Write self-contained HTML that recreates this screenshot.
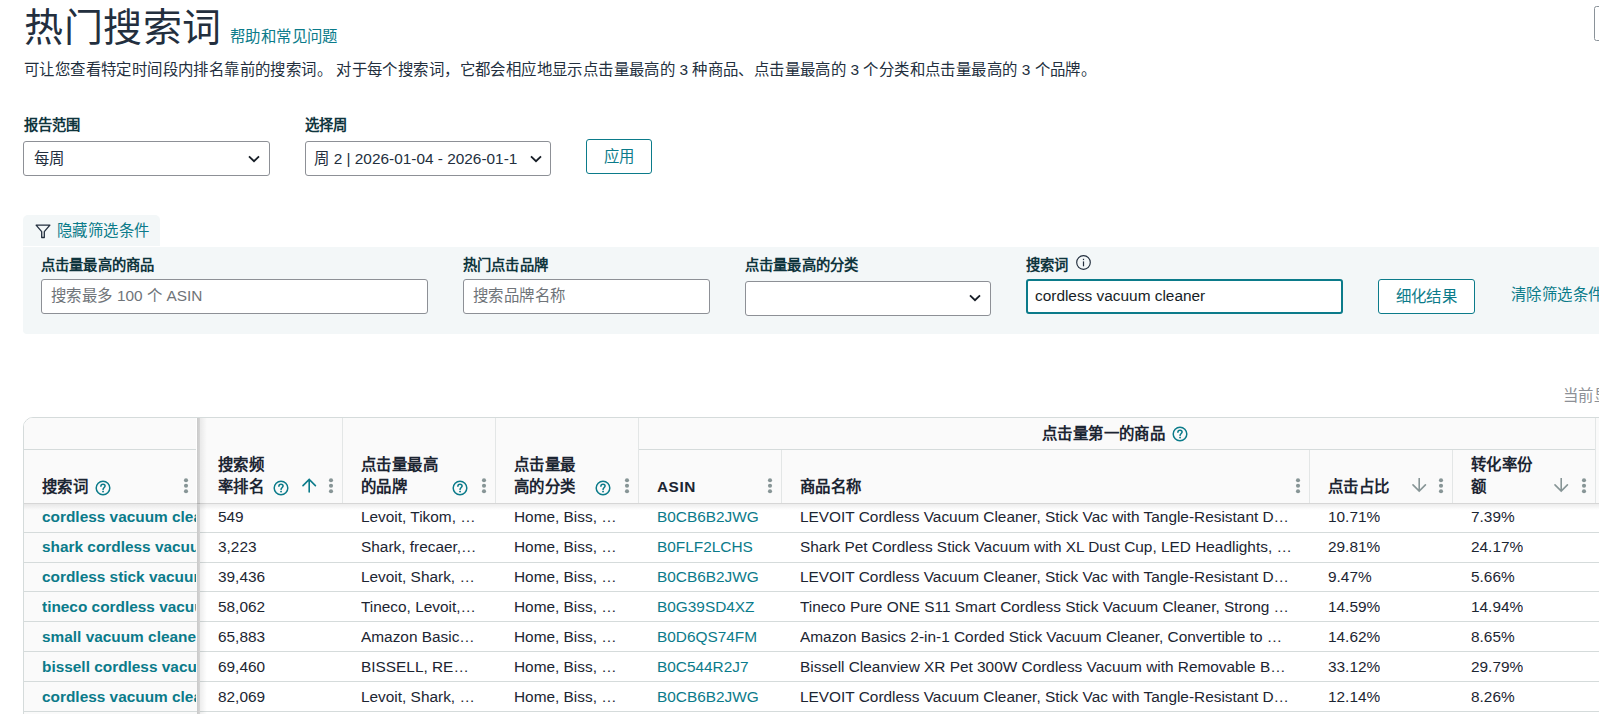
<!DOCTYPE html>
<html lang="zh-CN"><head><meta charset="utf-8">
<style>
*{box-sizing:border-box;margin:0;padding:0}
html,body{width:1599px;height:714px;overflow:hidden;background:#fff}
body{font-family:"Liberation Sans",sans-serif;color:#232f3e;position:relative;font-size:15.4px}
.a{position:absolute;white-space:nowrap}
.link{color:#0b7b8a}
.lbl{font-weight:bold;font-size:14.3px;color:#0f353d}
.sel,.inp{position:absolute;background:#fff;border:1px solid #8d9096;border-radius:3px}
.chev{position:absolute;width:10px;height:7px}
.btn{position:absolute;border:1px solid #0b7b8a;border-radius:3px;color:#0b7b8a;background:#fff;text-align:center}
.ph{color:#6f7479}
.th{position:absolute;font-weight:bold;font-size:15.4px;color:#1c2532;line-height:22px;white-space:nowrap}
.td{position:absolute;font-size:15.4px;line-height:29px;height:29px;white-space:nowrap;overflow:hidden;color:#1c2532}
.term{font-weight:bold;color:#0b7b8a}
.ic{position:absolute}
.c{font-style:normal;letter-spacing:0.026em}
.t .c{letter-spacing:0.6px}
.td.link{color:#0b7b8a}
.lbl .c{letter-spacing:0.15px}
</style></head><body>

<div class="a t" style="left:24px;top:3px;font-size:39px;line-height:50px;color:#232f3e"><i class="c">热门搜索词</i></div>
<div class="a link" style="left:230px;top:27px;font-size:15.4px;line-height:20px"><i class="c">帮助和常见问题</i></div>
<div class="a" style="left:1594px;top:6px;width:20px;height:35px;border:1px solid #8a9299;border-radius:2.5px"></div>
<div class="a" style="left:24px;top:60px;font-size:15.4px;line-height:20px"><i class="c">可让您查看特定时间段内排名靠前的搜索词。</i> <i class="c">对于每个搜索词，它都会相应地显示点击量最高的</i> 3 <i class="c">种商品、点击量最高的</i> 3 <i class="c">个分类和点击量最高的</i> 3 <i class="c">个品牌。</i></div>

<div class="a lbl" style="left:24px;top:114.5px;line-height:20px"><i class="c">报告范围</i></div>
<div class="sel" style="left:23px;top:141px;width:247px;height:35px"><span class="a" style="left:10px;top:7px;line-height:20px"><i class="c">每周</i></span>
<svg class="chev" style="left:224px;top:13px;width:12px;height:8px" viewBox="0 0 12 8"><path d="M1 1.3 L6 6.2 L11 1.3" fill="none" stroke="#161d26" stroke-width="1.8"/></svg></div>
<div class="a lbl" style="left:305px;top:114.5px;line-height:20px"><i class="c">选择周</i></div>
<div class="sel" style="left:305px;top:141px;width:246px;height:35px"><span class="a" style="left:8px;top:7px;line-height:20px"><i class="c">周</i> 2 | 2026-01-04 - 2026-01-1</span>
<svg class="chev" style="left:224px;top:13px;width:12px;height:8px" viewBox="0 0 12 8"><path d="M1 1.3 L6 6.2 L11 1.3" fill="none" stroke="#161d26" stroke-width="1.8"/></svg></div>
<div class="btn" style="left:586px;top:139px;width:66px;height:35px;line-height:33px"><i class="c">应用</i></div>

<!-- filter tab -->
<div class="a" style="left:23px;top:215px;width:137px;height:31px;background:#f3f7f8;border-radius:5px 5px 0 0"></div>
<svg class="a" style="left:35px;top:223.5px;width:16px;height:15px" viewBox="0 0 16 15"><path d="M1.1 1.2 H14.9 L9.3 7.7 V13.5 H6.7 V7.7 Z" fill="none" stroke="#232f3e" stroke-width="1.3" stroke-linejoin="round"/></svg>
<div class="a link" style="left:57px;top:221px;font-size:15.4px;line-height:20px"><i class="c">隐藏筛选条件</i></div>
<div class="a" style="left:23px;top:247px;width:1600px;height:87px;background:#f3f7f8;border-radius:0 0 0 4px"></div>

<div class="a lbl" style="left:41px;top:255px;line-height:20px"><i class="c">点击量最高的商品</i></div>
<div class="inp" style="left:41px;top:279px;width:387px;height:35px"><span class="a ph" style="left:9px;top:6px;line-height:20px"><i class="c">搜索最多</i> 100 <i class="c">个</i> ASIN</span></div>
<div class="a lbl" style="left:463px;top:255px;line-height:20px"><i class="c">热门点击品牌</i></div>
<div class="inp" style="left:463px;top:279px;width:247px;height:35px"><span class="a ph" style="left:9px;top:6px;line-height:20px"><i class="c">搜索品牌名称</i></span></div>
<div class="a lbl" style="left:745px;top:255px;line-height:20px"><i class="c">点击量最高的分类</i></div>
<div class="sel" style="left:745px;top:281px;width:246px;height:35px">
<svg class="chev" style="left:223px;top:12px;width:12px;height:8px" viewBox="0 0 12 8"><path d="M1 1.3 L6 6.2 L11 1.3" fill="none" stroke="#161d26" stroke-width="1.8"/></svg></div>
<div class="a lbl" style="left:1026px;top:255px;line-height:20px"><i class="c">搜索词</i></div>
<svg class="a" style="left:1076px;top:255px;width:15px;height:15px" viewBox="0 0 15 15"><circle cx="7.5" cy="7.5" r="6.8" fill="none" stroke="#232f3e" stroke-width="1.15"/><rect x="6.9" y="6.4" width="1.2" height="4.9" fill="#232f3e"/><rect x="6.9" y="3.8" width="1.2" height="1.3" fill="#232f3e"/></svg>
<div class="inp" style="left:1026px;top:279px;width:317px;height:35px;border:2px solid #0b7b8a;border-radius:3px"><span class="a" style="left:7px;top:5px;line-height:20px;color:#161d26">cordless vacuum cleaner</span></div>
<div class="btn" style="left:1378px;top:279px;width:97px;height:35px;line-height:33px"><i class="c">细化结果</i></div>
<div class="a link" style="left:1511px;top:285px;line-height:20px"><i class="c">清除筛选条件</i></div>

<div class="a" style="left:1563px;top:386px;line-height:20px;color:#8d9096"><i class="c">当前显示</i></div>

<div class="a" style="left:23px;top:417px;width:1620px;height:320px;border:1px solid #d5dbdb;border-radius:10px 0 0 0;background:#fff;overflow:hidden">
<div class="a" style="left:0;top:0;width:1620px;height:85px;background:#fafafa"></div>
<div class="a" style="left:614px;top:31px;width:957px;height:1px;background:#d5dbdb"></div>
<div class="a" style="left:318px;top:0;width:1px;height:85px;background:#e3e6e6"></div>
<div class="a" style="left:471px;top:0;width:1px;height:85px;background:#e3e6e6"></div>
<div class="a" style="left:614px;top:0;width:1px;height:85px;background:#e3e6e6"></div>
<div class="a" style="left:757px;top:32px;width:1px;height:53px;background:#e3e6e6"></div>
<div class="a" style="left:1285px;top:32px;width:1px;height:53px;background:#e3e6e6"></div>
<div class="a" style="left:1428px;top:32px;width:1px;height:53px;background:#e3e6e6"></div>
<div class="a" style="left:1571px;top:0;width:1px;height:85px;background:#e3e6e6"></div>
<div class="a" style="left:0;top:85px;width:1620px;height:1px;background:#d6d6d6"></div><div class="a" style="left:0;top:86px;width:1620px;height:6px;background:linear-gradient(rgba(0,0,0,0.075),rgba(0,0,0,0))"></div>
<div class="a" style="left:0;top:114px;width:1620px;height:1px;background:#d5dbdb"></div>
<div class="td" style="left:194px;top:84px">549</div>
<div class="td" style="left:337px;top:84px">Levoit, Tikom, …</div>
<div class="td" style="left:490px;top:84px">Home, Biss, …</div>
<div class="td link" style="left:633px;top:84px">B0CB6B2JWG</div>
<div class="td" style="left:776px;top:84px">LEVOIT Cordless Vacuum Cleaner, Stick Vac with Tangle-Resistant D…</div>
<div class="td" style="left:1304px;top:84px">10.71%</div>
<div class="td" style="left:1447px;top:84px">7.39%</div>
<div class="a" style="left:0;top:144px;width:1620px;height:1px;background:#d5dbdb"></div>
<div class="td" style="left:194px;top:114px">3,223</div>
<div class="td" style="left:337px;top:114px">Shark, frecaer,…</div>
<div class="td" style="left:490px;top:114px">Home, Biss, …</div>
<div class="td link" style="left:633px;top:114px">B0FLF2LCHS</div>
<div class="td" style="left:776px;top:114px">Shark Pet Cordless Stick Vacuum with XL Dust Cup, LED Headlights, …</div>
<div class="td" style="left:1304px;top:114px">29.81%</div>
<div class="td" style="left:1447px;top:114px">24.17%</div>
<div class="a" style="left:0;top:173px;width:1620px;height:1px;background:#d5dbdb"></div>
<div class="td" style="left:194px;top:144px">39,436</div>
<div class="td" style="left:337px;top:144px">Levoit, Shark, …</div>
<div class="td" style="left:490px;top:144px">Home, Biss, …</div>
<div class="td link" style="left:633px;top:144px">B0CB6B2JWG</div>
<div class="td" style="left:776px;top:144px">LEVOIT Cordless Vacuum Cleaner, Stick Vac with Tangle-Resistant D…</div>
<div class="td" style="left:1304px;top:144px">9.47%</div>
<div class="td" style="left:1447px;top:144px">5.66%</div>
<div class="a" style="left:0;top:203px;width:1620px;height:1px;background:#d5dbdb"></div>
<div class="td" style="left:194px;top:174px">58,062</div>
<div class="td" style="left:337px;top:174px">Tineco, Levoit,…</div>
<div class="td" style="left:490px;top:174px">Home, Biss, …</div>
<div class="td link" style="left:633px;top:174px">B0G39SD4XZ</div>
<div class="td" style="left:776px;top:174px">Tineco Pure ONE S11 Smart Cordless Stick Vacuum Cleaner, Strong …</div>
<div class="td" style="left:1304px;top:174px">14.59%</div>
<div class="td" style="left:1447px;top:174px">14.94%</div>
<div class="a" style="left:0;top:233px;width:1620px;height:1px;background:#d5dbdb"></div>
<div class="td" style="left:194px;top:204px">65,883</div>
<div class="td" style="left:337px;top:204px">Amazon Basic…</div>
<div class="td" style="left:490px;top:204px">Home, Biss, …</div>
<div class="td link" style="left:633px;top:204px">B0D6QS74FM</div>
<div class="td" style="left:776px;top:204px">Amazon Basics 2-in-1 Corded Stick Vacuum Cleaner, Convertible to …</div>
<div class="td" style="left:1304px;top:204px">14.62%</div>
<div class="td" style="left:1447px;top:204px">8.65%</div>
<div class="a" style="left:0;top:263px;width:1620px;height:1px;background:#d5dbdb"></div>
<div class="td" style="left:194px;top:234px">69,460</div>
<div class="td" style="left:337px;top:234px">BISSELL, RE…</div>
<div class="td" style="left:490px;top:234px">Home, Biss, …</div>
<div class="td link" style="left:633px;top:234px">B0C544R2J7</div>
<div class="td" style="left:776px;top:234px">Bissell Cleanview XR Pet 300W Cordless Vacuum with Removable B…</div>
<div class="td" style="left:1304px;top:234px">33.12%</div>
<div class="td" style="left:1447px;top:234px">29.79%</div>
<div class="a" style="left:0;top:293px;width:1620px;height:1px;background:#d5dbdb"></div>
<div class="td" style="left:194px;top:264px">82,069</div>
<div class="td" style="left:337px;top:264px">Levoit, Shark, …</div>
<div class="td" style="left:490px;top:264px">Home, Biss, …</div>
<div class="td link" style="left:633px;top:264px">B0CB6B2JWG</div>
<div class="td" style="left:776px;top:264px">LEVOIT Cordless Vacuum Cleaner, Stick Vac with Tangle-Resistant D…</div>
<div class="td" style="left:1304px;top:264px">12.14%</div>
<div class="td" style="left:1447px;top:264px">8.26%</div>
<div class="a" style="left:0;top:0;width:173px;height:320px;background:#fafafa"></div>
<div class="a" style="left:0;top:31px;width:173px;height:1px;background:#d5dbdb"></div>
<div class="a" style="left:0;top:85px;width:173px;height:1px;background:#d6d6d6"></div><div class="a" style="left:0;top:86px;width:173px;height:6px;background:linear-gradient(rgba(0,0,0,0.075),rgba(0,0,0,0))"></div>
<div class="a" style="left:0;top:114px;width:173px;height:1px;background:#d5dbdb"></div>
<div class="td term" style="left:18px;top:84px;width:154px">cordless vacuum cleaner</div>
<div class="a" style="left:0;top:144px;width:173px;height:1px;background:#d5dbdb"></div>
<div class="td term" style="left:18px;top:114px;width:154px">shark cordless vacuum</div>
<div class="a" style="left:0;top:173px;width:173px;height:1px;background:#d5dbdb"></div>
<div class="td term" style="left:18px;top:144px;width:154px">cordless stick vacuum</div>
<div class="a" style="left:0;top:203px;width:173px;height:1px;background:#d5dbdb"></div>
<div class="td term" style="left:18px;top:174px;width:154px">tineco cordless vacuum</div>
<div class="a" style="left:0;top:233px;width:173px;height:1px;background:#d5dbdb"></div>
<div class="td term" style="left:18px;top:204px;width:154px">small vacuum cleaner</div>
<div class="a" style="left:0;top:263px;width:173px;height:1px;background:#d5dbdb"></div>
<div class="td term" style="left:18px;top:234px;width:154px">bissell cordless vacuum</div>
<div class="a" style="left:0;top:293px;width:173px;height:1px;background:#d5dbdb"></div>
<div class="td term" style="left:18px;top:264px;width:154px">cordless vacuum cleaner</div>
<div class="a" style="left:172px;top:0;width:1px;height:85px;background:#fff"></div><div class="a" style="left:173px;top:85px;width:3px;height:1px;background:#b0b0b0;z-index:2"></div><div class="a" style="left:173px;top:0;width:3px;height:320px;background:linear-gradient(90deg,#c9c9c9,#d6d6d6)"></div><div class="a" style="left:176px;top:0;width:7px;height:320px;background:linear-gradient(90deg,rgba(0,0,0,0.07),rgba(0,0,0,0))"></div>
<div class="th" style="left:18px;top:58px"><i class="c">搜索词</i></div>
<div class="th" style="left:194px;top:36px"><i class="c">搜索频</i><br><i class="c">率排名</i></div>
<div class="th" style="left:337px;top:36px"><i class="c">点击量最高</i><br><i class="c">的品牌</i></div>
<div class="th" style="left:490px;top:36px"><i class="c">点击量最</i><br><i class="c">高的分类</i></div>
<div class="th" style="left:633px;top:58px"><span style="letter-spacing:0.5px">ASIN</span></div>
<div class="th" style="left:776px;top:58px"><i class="c">商品名称</i></div>
<div class="th" style="left:1304px;top:58px"><i class="c">点击占比</i></div>
<div class="th" style="left:1447px;top:36px"><i class="c">转化率份</i><br><i class="c">额</i></div>
<div class="th" style="left:1018px;top:5px"><i class="c">点击量第一的商品</i></div>
<svg class="ic" style="left:70.6px;top:62.4px;width:16px;height:16px" viewBox="0 0 16 16"><circle cx="8" cy="8" r="6.8" fill="none" stroke="#0b7b8a" stroke-width="1.5"/><path d="M5.9 6.3 C5.9 5 6.9 4.3 8 4.3 C9.2 4.3 10.1 5.1 10.1 6.1 C10.1 7.4 8.4 7.6 8.1 9.2 V9.6" fill="none" stroke="#0b7b8a" stroke-width="1.5" stroke-linecap="round"/><circle cx="8.05" cy="11.6" r="0.95" fill="#0b7b8a"/></svg>
<svg class="ic" style="left:159px;top:59.5px;width:6px;height:16px" viewBox="0 0 6 16"><circle cx="3" cy="2.2" r="2.05" fill="#879596"/><circle cx="3" cy="7.7" r="2.05" fill="#879596"/><circle cx="3" cy="13.2" r="2.05" fill="#879596"/></svg>
<svg class="ic" style="left:248.6px;top:62.4px;width:16px;height:16px" viewBox="0 0 16 16"><circle cx="8" cy="8" r="6.8" fill="none" stroke="#0b7b8a" stroke-width="1.5"/><path d="M5.9 6.3 C5.9 5 6.9 4.3 8 4.3 C9.2 4.3 10.1 5.1 10.1 6.1 C10.1 7.4 8.4 7.6 8.1 9.2 V9.6" fill="none" stroke="#0b7b8a" stroke-width="1.5" stroke-linecap="round"/><circle cx="8.05" cy="11.6" r="0.95" fill="#0b7b8a"/></svg>
<svg class="ic" style="left:278px;top:60px;width:15px;height:15px" viewBox="0 0 15 15"><path d="M7.2 14 V1.6 M1 7.6 L7.2 1.4 L13.4 7.6" fill="none" stroke="#0b7b8a" stroke-width="1.6" stroke-linecap="round" stroke-linejoin="miter"/></svg>
<svg class="ic" style="left:304px;top:59.5px;width:6px;height:16px" viewBox="0 0 6 16"><circle cx="3" cy="2.2" r="2.05" fill="#879596"/><circle cx="3" cy="7.7" r="2.05" fill="#879596"/><circle cx="3" cy="13.2" r="2.05" fill="#879596"/></svg>
<svg class="ic" style="left:427.6px;top:62.4px;width:16px;height:16px" viewBox="0 0 16 16"><circle cx="8" cy="8" r="6.8" fill="none" stroke="#0b7b8a" stroke-width="1.5"/><path d="M5.9 6.3 C5.9 5 6.9 4.3 8 4.3 C9.2 4.3 10.1 5.1 10.1 6.1 C10.1 7.4 8.4 7.6 8.1 9.2 V9.6" fill="none" stroke="#0b7b8a" stroke-width="1.5" stroke-linecap="round"/><circle cx="8.05" cy="11.6" r="0.95" fill="#0b7b8a"/></svg>
<svg class="ic" style="left:457px;top:59.5px;width:6px;height:16px" viewBox="0 0 6 16"><circle cx="3" cy="2.2" r="2.05" fill="#879596"/><circle cx="3" cy="7.7" r="2.05" fill="#879596"/><circle cx="3" cy="13.2" r="2.05" fill="#879596"/></svg>
<svg class="ic" style="left:570.6px;top:62.4px;width:16px;height:16px" viewBox="0 0 16 16"><circle cx="8" cy="8" r="6.8" fill="none" stroke="#0b7b8a" stroke-width="1.5"/><path d="M5.9 6.3 C5.9 5 6.9 4.3 8 4.3 C9.2 4.3 10.1 5.1 10.1 6.1 C10.1 7.4 8.4 7.6 8.1 9.2 V9.6" fill="none" stroke="#0b7b8a" stroke-width="1.5" stroke-linecap="round"/><circle cx="8.05" cy="11.6" r="0.95" fill="#0b7b8a"/></svg>
<svg class="ic" style="left:600px;top:59.5px;width:6px;height:16px" viewBox="0 0 6 16"><circle cx="3" cy="2.2" r="2.05" fill="#879596"/><circle cx="3" cy="7.7" r="2.05" fill="#879596"/><circle cx="3" cy="13.2" r="2.05" fill="#879596"/></svg>
<svg class="ic" style="left:743px;top:59.5px;width:6px;height:16px" viewBox="0 0 6 16"><circle cx="3" cy="2.2" r="2.05" fill="#879596"/><circle cx="3" cy="7.7" r="2.05" fill="#879596"/><circle cx="3" cy="13.2" r="2.05" fill="#879596"/></svg>
<svg class="ic" style="left:1271px;top:59.5px;width:6px;height:16px" viewBox="0 0 6 16"><circle cx="3" cy="2.2" r="2.05" fill="#879596"/><circle cx="3" cy="7.7" r="2.05" fill="#879596"/><circle cx="3" cy="13.2" r="2.05" fill="#879596"/></svg>
<svg class="ic" style="left:1388px;top:60px;width:15px;height:15px" viewBox="0 0 15 15"><path d="M7.2 0.5 V12.9 M1 6.9 L7.2 13.1 L13.4 6.9" fill="none" stroke="#879596" stroke-width="1.6" stroke-linecap="round" stroke-linejoin="miter"/></svg>
<svg class="ic" style="left:1414px;top:59.5px;width:6px;height:16px" viewBox="0 0 6 16"><circle cx="3" cy="2.2" r="2.05" fill="#879596"/><circle cx="3" cy="7.7" r="2.05" fill="#879596"/><circle cx="3" cy="13.2" r="2.05" fill="#879596"/></svg>
<svg class="ic" style="left:1530px;top:60px;width:15px;height:15px" viewBox="0 0 15 15"><path d="M7.2 0.5 V12.9 M1 6.9 L7.2 13.1 L13.4 6.9" fill="none" stroke="#879596" stroke-width="1.6" stroke-linecap="round" stroke-linejoin="miter"/></svg>
<svg class="ic" style="left:1557px;top:59.5px;width:6px;height:16px" viewBox="0 0 6 16"><circle cx="3" cy="2.2" r="2.05" fill="#879596"/><circle cx="3" cy="7.7" r="2.05" fill="#879596"/><circle cx="3" cy="13.2" r="2.05" fill="#879596"/></svg>
<svg class="ic" style="left:1147.6px;top:8.4px;width:16px;height:16px" viewBox="0 0 16 16"><circle cx="8" cy="8" r="6.8" fill="none" stroke="#0b7b8a" stroke-width="1.5"/><path d="M5.9 6.3 C5.9 5 6.9 4.3 8 4.3 C9.2 4.3 10.1 5.1 10.1 6.1 C10.1 7.4 8.4 7.6 8.1 9.2 V9.6" fill="none" stroke="#0b7b8a" stroke-width="1.5" stroke-linecap="round"/><circle cx="8.05" cy="11.6" r="0.95" fill="#0b7b8a"/></svg>
</div>
</body></html>
